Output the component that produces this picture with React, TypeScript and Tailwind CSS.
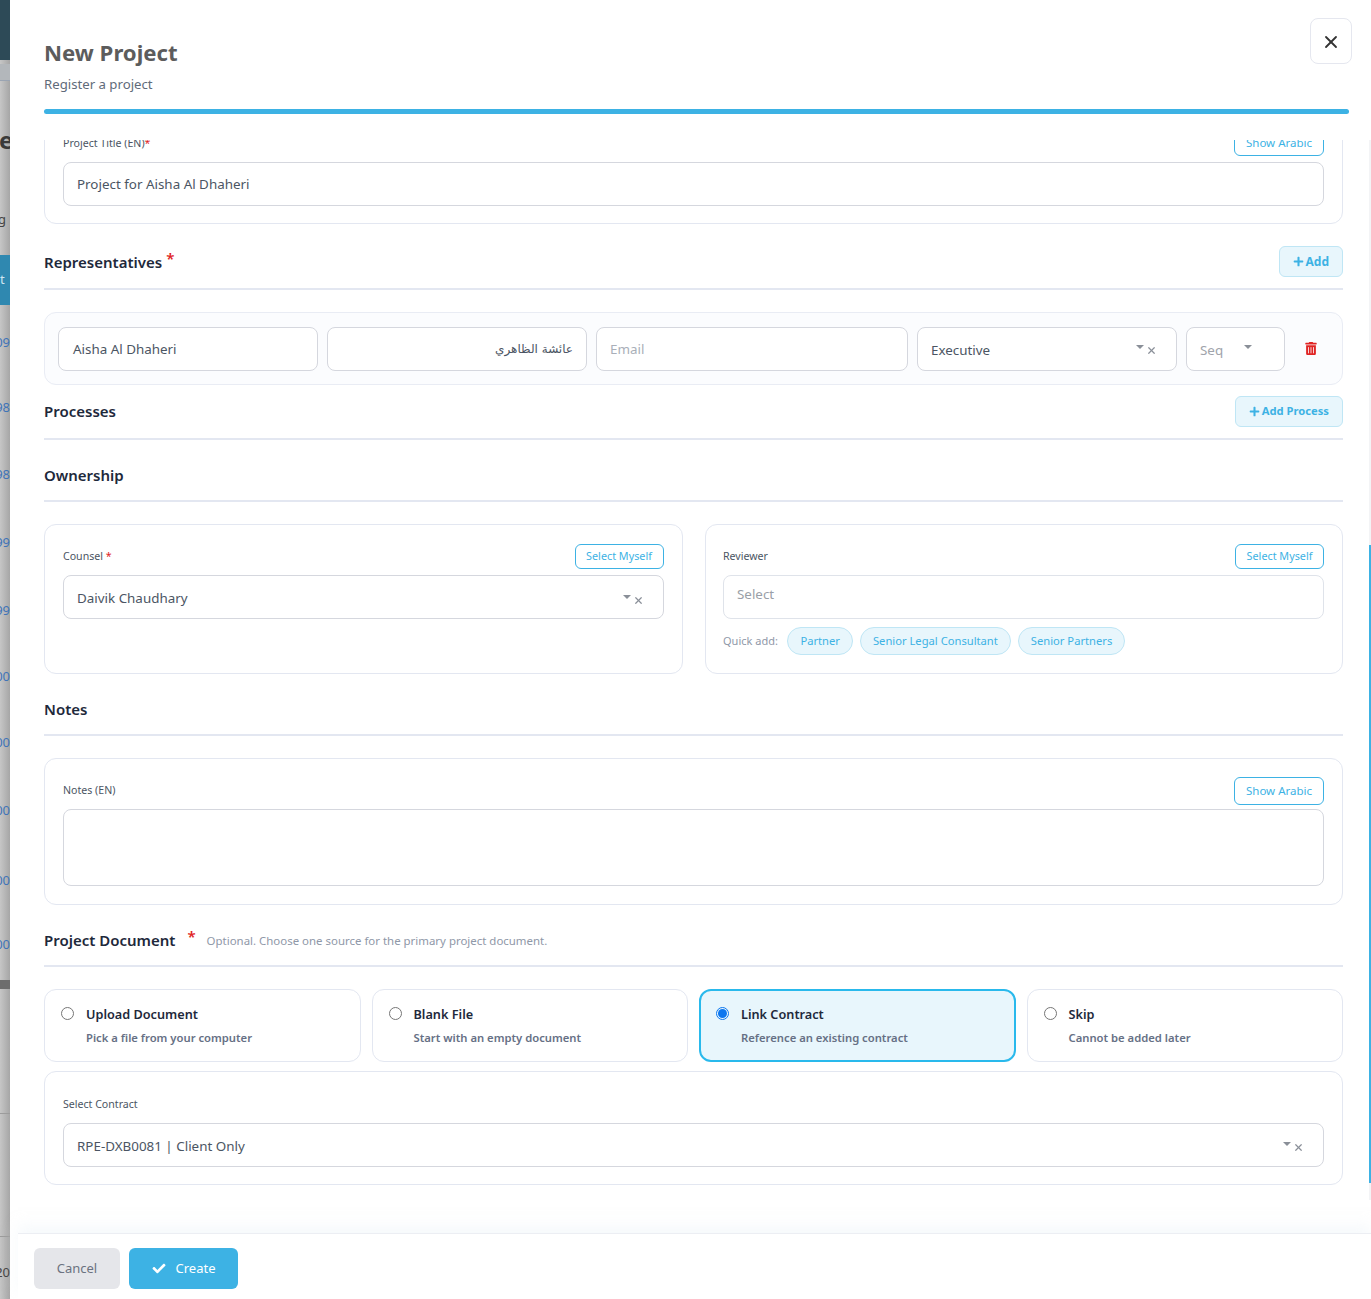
import React from "react";
import { X } from "lucide-react";
import { FaCheck, FaPlus, FaTrashAlt } from "react-icons/fa";

const SectionHead: React.FC<{ title: string; star?: boolean; action?: string; small?: boolean }> = ({ title, star, action, small }) => (
  <div className="flex items-center justify-between border-b-2 border-[#e3e7f1] pb-[11px]">
    <h3 className={`text-[15px] leading-5 font-semibold text-[#1e293b] ${small ? "pb-[2px]" : ""}`}>
      {title}
      {star && <span className="ml-[4px] inline-block -translate-y-[4px] text-[#e02424]">*</span>}
    </h3>
    {action && (
      <button className={`flex h-[31px] items-center gap-[2px] rounded-md border border-[#bfe6f5] bg-[#e8f6fc] px-[13px] font-bold text-[#3db2e4] ${small ? "text-[11.2px]" : "text-xs"}`}>
        <FaPlus className="h-[11px] w-[11px]" />
        {action}
      </button>
    )}
  </div>
);

const OutlineBtn: React.FC<{ label: string; className?: string }> = ({ label, className }) => (
  <button className={`flex items-center justify-center rounded-md border border-[#3db2e4] bg-white text-[#3db2e4] ${className ?? ""}`}>
    {label}
  </button>
);

const Carets: React.FC<{ clear?: boolean }> = ({ clear = true }) => (
  <span className="flex items-center gap-[2px] text-[#8a8f98]">
    <span className="mb-[3px] h-0 w-0 border-x-[4px] border-t-[4px] border-x-transparent border-t-[#8a8f98]" />
    {clear && <X className="mt-[4px] h-[11px] w-[11px]" strokeWidth={2.6} />}
  </span>
);

const RadioCard: React.FC<{ title: string; sub: string; active?: boolean }> = ({ title, sub, active }) => (
  <div className={`flex h-[73px] gap-[12px] rounded-xl ${active ? "border-2 border-[#29b9ec] bg-[#e8f6fc] px-[15px] pt-[15px]" : "border border-[#e3e7f1] bg-white px-4 pt-[16px]"}`}>
    <span className={`mt-px flex h-[13px] w-[13px] shrink-0 items-center justify-center rounded-full border ${active ? "border-[#0b76ef]" : "border-[#767676]"}`}>
      {active && <span className="h-[9px] w-[9px] rounded-full bg-[#0b76ef]" />}
    </span>
    <div>
      <div className="text-[12.7px] leading-4 font-semibold text-[#1e293b]">{title}</div>
      <div className="mt-2 text-[11.25px] leading-4 font-semibold text-[#667085]">{sub}</div>
    </div>
  </div>
);

const inputBox = "flex h-[44px] items-center rounded-lg border border-[#d5d7de] bg-white px-[13px] text-[13.4px] text-[#4b5563]";

export default function App() {
  return (
    <div className="relative flex h-[1299px] w-[1371px] overflow-hidden bg-white font-['Noto_Sans',sans-serif]">
      {/* page behind the drawer */}
      <div className="relative w-[10px] shrink-0 overflow-hidden bg-gradient-to-r from-[#c6c6c6] to-[#a6a6a6] text-[13px] text-[#3f74b8]">
        <div className="h-[60px] bg-[#2d4a57]" />
        <div className="absolute top-[64px] h-[16px] w-full bg-[#b3b7bb]" />
        <div className="absolute top-[80px] h-px w-full bg-[#9aa4b2]" />
        <div className="absolute top-[122px] -left-[1px] text-[24px] font-bold text-[#3a3a3a]">e</div>
        <div className="absolute top-[210px] -left-[2px] text-[#444]">g</div>
        <div className="absolute top-[255px] flex h-[50px] w-full items-center bg-[#2f88b0] text-[#cfe6f0]">t</div>
        <div className="absolute top-[333px] right-0">09</div>
        <div className="absolute top-[398px] right-0">98</div>
        <div className="absolute top-[465px] right-0">98</div>
        <div className="absolute top-[533px] right-0">99</div>
        <div className="absolute top-[601px] right-0">99</div>
        <div className="absolute top-[667px] right-0">00</div>
        <div className="absolute top-[733px] right-0">00</div>
        <div className="absolute top-[801px] right-0">00</div>
        <div className="absolute top-[871px] right-0">00</div>
        <div className="absolute top-[935px] right-0">00</div>
        <div className="absolute top-[980px] h-[9px] w-full bg-[#6d6d6d]" />
        <div className="absolute top-[1113px] h-px w-full bg-[#9c9c9c]" />
        <div className="absolute top-[1236px] h-px w-full bg-[#9c9c9c]" />
        <div className="absolute top-[1263px] right-0 text-[#444]">20</div>
      </div>

      {/* drawer */}
      <div className="relative flex min-w-0 flex-1 flex-col bg-white">
        <header className="relative h-[140px] shrink-0 pt-[37px] pr-[22px] pl-[34px]">
          <h2 className="text-[22.2px] leading-[32px] font-bold text-[#5c5c5c]">New Project</h2>
          <p className="mt-[5px] text-[13.2px] leading-5 text-[#5f6b7a]">Register a project</p>
          <div className="mt-[15px] h-[5px] rounded-full bg-[#3db2e4]" />
          <button className="absolute top-[18px] right-[19px] flex h-[46px] w-[42px] items-center justify-center rounded-lg border border-[#e5e7ef] bg-white pt-px text-[#333]">
            <X className="h-5 w-5" strokeWidth={2.2} />
          </button>
        </header>

        <div className="h-[1093px] shrink-0 overflow-hidden pr-[28px] pl-[34px]">
          <div className="-mt-[22px]">
            <div className="rounded-xl border border-[#e3e7f1] bg-white px-[18px] pt-[9px] pb-[17px]">
              <div className="flex items-center justify-between">
                <span className="pt-[2px] text-[10.6px] leading-4 text-[#4b5563]">
                  Project Title (EN)<span className="text-[#e02424]">*</span>
                </span>
                <OutlineBtn label="Show Arabic" className="h-[28px] w-[90px] pt-[2px] text-[11.5px]" />
              </div>
              <div className={`mt-[6px] ${inputBox}`}>Project for Aisha Al Dhaheri</div>
            </div>

            <div className="mt-[22px]">
              <SectionHead title="Representatives" star action="Add" />
            </div>

            <div className="mt-[22px] flex h-[73px] items-center gap-[9px] rounded-xl border border-[#e9ecf4] bg-[#fbfcfe] pl-[13px]">
              <div className={`w-[260px] pt-[2px] pl-[14px] ${inputBox}`}>Aisha Al Dhaheri</div>
              <div className={`w-[260px] justify-end ${inputBox}`}>
                <span dir="rtl" className="font-['DejaVu_Sans',sans-serif] text-[12px]">عائشة الظاهري</span>
              </div>
              <div className={`w-[312px] pt-[2px] ${inputBox} text-[#a9afb9]`}>Email</div>
              <div className={`w-[260px] justify-between ${inputBox}`}>
                <span className="pt-[4px]">Executive</span>
                <span className="pr-[6px]"><Carets /></span>
              </div>
              <div className={`w-[99px] justify-between ${inputBox} text-[#a0a4ab]`}>
                <span className="pt-[4px]">Seq</span>
                <span className="pr-[19px]"><Carets clear={false} /></span>
              </div>
              <FaTrashAlt className="ml-[11px] h-[13px] w-[12px] text-[#e02424]" />
            </div>

            <div className="mt-[11px]">
              <SectionHead title="Processes" action="Add Process" small />
            </div>

            <h3 className="mt-[25px] border-b-2 border-[#e3e7f1] pb-[15px] text-[15px] leading-5 font-semibold text-[#1e293b]">Ownership</h3>

            <div className="mt-[22px] grid grid-cols-2 gap-[22px]">
              <div className="h-[150px] rounded-xl border border-[#e3e7f1] bg-white px-[18px] pt-[19px]">
                <div className="flex h-[25px] items-center justify-between">
                  <span className="text-[10.6px] text-[#4b5563]">
                    Counsel <span className="text-[#e02424]">*</span>
                  </span>
                  <OutlineBtn label="Select Myself" className="h-[25px] w-[89px] text-[10.8px]" />
                </div>
                <div className={`mt-[6px] justify-between pt-[2px] ${inputBox}`}>
                  Daivik Chaudhary
                  <span className="pr-[6px]"><Carets /></span>
                </div>
              </div>
              <div className="h-[150px] rounded-xl border border-[#e3e7f1] bg-white pt-[19px] pr-[18px] pl-[17.5px]">
                <div className="flex h-[25px] items-center justify-between">
                  <span className="text-[10.6px] text-[#4b5563]">Reviewer</span>
                  <OutlineBtn label="Select Myself" className="h-[25px] w-[89px] text-[10.8px]" />
                </div>
                <div className={`mt-[6px] ${inputBox} border-[#dfe3ea] pb-[5px] text-[#9a9fa8]`}>Select</div>
                <div className="mt-[8px] flex items-center gap-[7px]">
                  <span className="mr-[2.5px] text-[11px] text-[#8f98a8]">Quick add:</span>
                  {["Partner", "Senior Legal Consultant", "Senior Partners"].map((q) => (
                    <span key={q} className="flex h-[28px] items-center rounded-full border border-[#bfe6f5] bg-[#e8f6fc] px-3 text-[11.2px] text-[#3db2e4]">
                      {q}
                    </span>
                  ))}
                </div>
              </div>
            </div>

            <h3 className="mt-[25px] border-b-2 border-[#e3e7f1] pb-[15px] text-[15px] leading-5 font-semibold text-[#1e293b]">Notes</h3>

            <div className="mt-[22px] h-[147px] rounded-xl border border-[#e3e7f1] bg-white px-[18px] pt-[18px]">
              <div className="flex items-center justify-between">
                <span className="text-[10.6px] text-[#4b5563]">Notes (EN)</span>
                <OutlineBtn label="Show Arabic" className="h-[28px] w-[90px] text-[11.5px]" />
              </div>
              <div className="mt-[4px] h-[77px] rounded-lg border border-[#d5d7de] bg-white" />
            </div>

            <div className="mt-[25px] flex items-center border-b-2 border-[#e3e7f1] pb-[15px]">
              <h3 className="text-[15px] leading-5 font-semibold text-[#1e293b]">
                Project Document<span className="ml-[12px] inline-block -translate-y-[4px] text-[#e02424]">*</span>
              </h3>
              <span className="mt-px ml-[11px] text-[11.45px] text-[#8f98a8]">Optional. Choose one source for the primary project document.</span>
            </div>

            <div className="mt-[22px] grid grid-cols-4 gap-[11px]">
              <RadioCard title="Upload Document" sub="Pick a file from your computer" />
              <RadioCard title="Blank File" sub="Start with an empty document" />
              <RadioCard title="Link Contract" sub="Reference an existing contract" active />
              <RadioCard title="Skip" sub="Cannot be added later" />
            </div>

            <div className="mt-[9px] h-[114px] rounded-xl border border-[#e3e7f1] bg-white px-[18px] pt-[24px]">
              <div className="text-[10.6px] leading-4 text-[#4b5563]">Select Contract</div>
              <div className={`mt-[11px] justify-between ${inputBox}`}>
                <span className="pt-[3px]">RPE-DXB0081 | Client Only</span>
                <span className="pr-[6px]"><Carets /></span>
              </div>
            </div>
          </div>
        </div>

        <footer className="ml-[8px] flex h-[66px] shrink-0 items-start gap-[9px] border-t border-[#eceef3] bg-white pt-[14px] pl-[16px] shadow-[0_-8px_12px_rgba(240,245,250,0.5)]">
          <button className="h-[41px] w-[86px] rounded-md bg-[#e5e6ea] text-[13px] text-[#6b7280]">Cancel</button>
          <button className="flex h-[41px] w-[109px] items-center justify-center gap-[10px] rounded-md bg-[#3db2e4] text-[13px] text-white">
            <FaCheck className="h-[13px] w-[14px]" />
            Create
          </button>
        </footer>

        {/* scrollbar */}
        <div className="absolute top-[140px] right-0 h-[1060px] w-[2px] bg-[#f3f4f6]" />
        <div className="absolute top-[545px] right-0 h-[638px] w-[2px] bg-[#3db2e4]" />
      </div>
    </div>
  );
}
